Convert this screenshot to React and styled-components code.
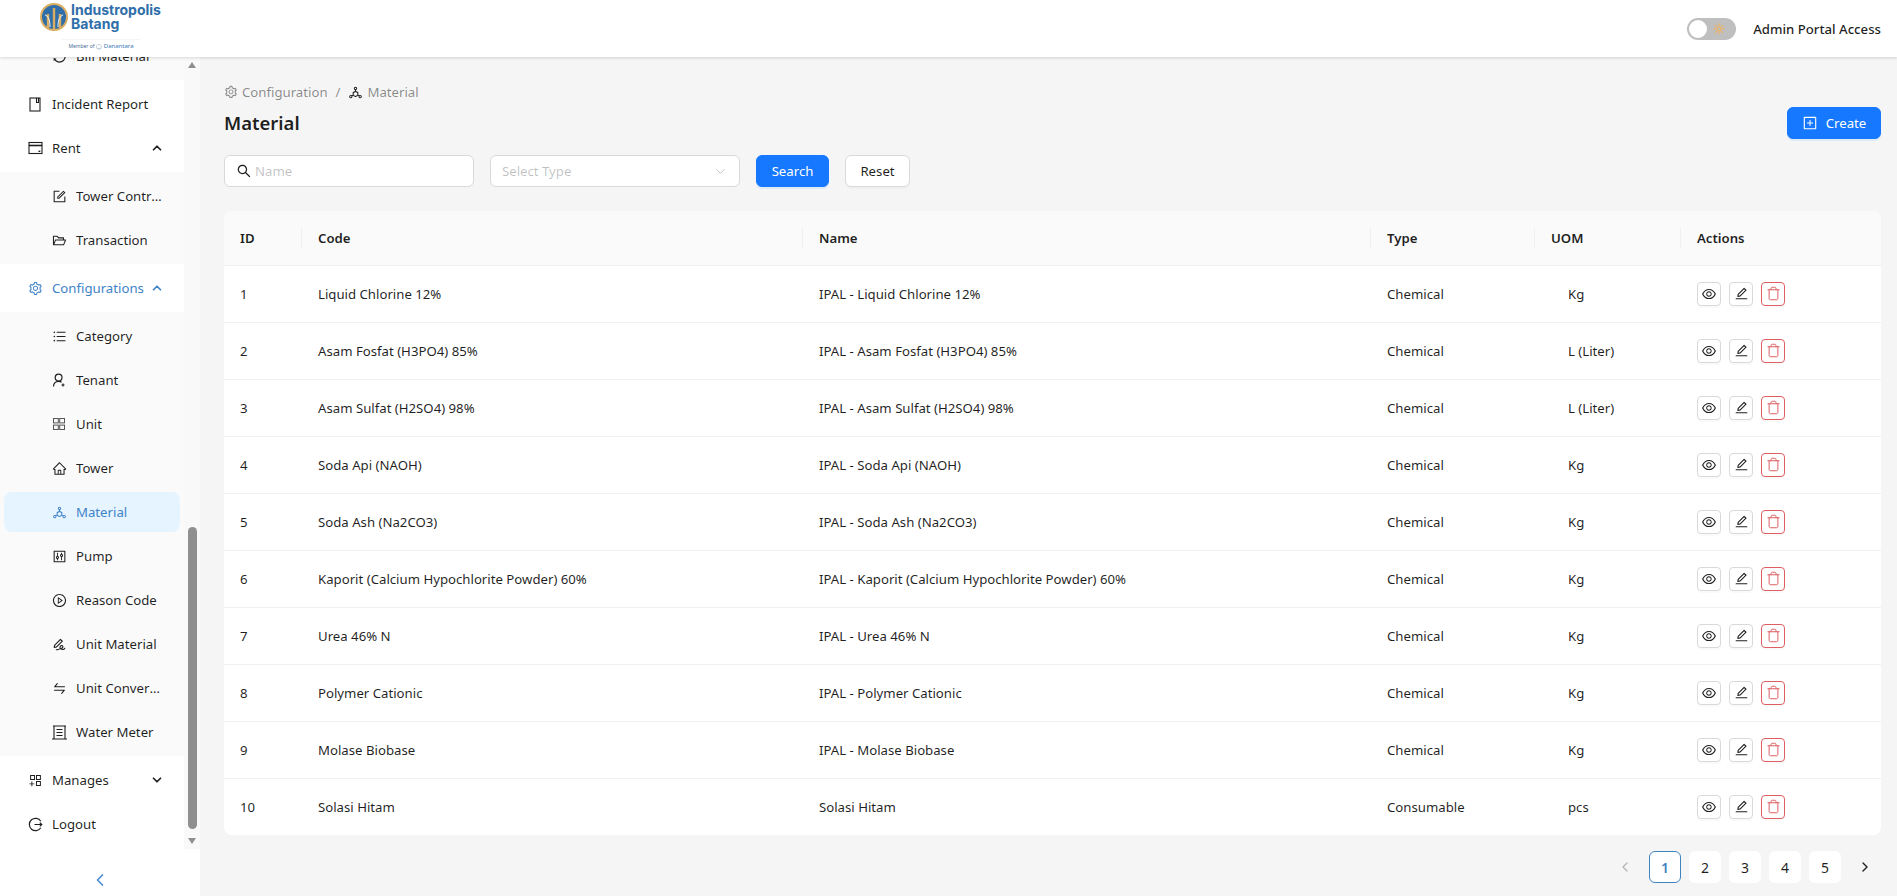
import React from 'react';
import styled, { createGlobalStyle } from 'styled-components';
import {
  AiOutlineAppstoreAdd,
  AiOutlineControl,
  AiOutlineDeploymentUnit,
  AiOutlineEdit,
  AiOutlineEye,
  AiOutlineFolderOpen,
  AiOutlineForm,
  AiOutlineHome,
  AiOutlinePlayCircle,
  AiOutlinePlusSquare,
  AiOutlineSearch,
  AiOutlineSetting,
  AiOutlineSignature,
  AiOutlineSwap,
  AiOutlineSync,
  AiOutlineUnorderedList,
} from 'react-icons/ai';
import { LuChevronDown, LuChevronLeft, LuChevronRight, LuChevronUp, LuSun, LuTrash } from 'react-icons/lu';

const GlobalStyle = createGlobalStyle`
  html, body {
    margin: 0;
    padding: 0;
    height: 100%;
  }
  body {
    font-family: "Noto Sans", "Open Sans", Arial, sans-serif;
    font-size: 13.2px;
    color: rgba(0, 0, 0, 0.88);
    background: #f5f5f5;
  }
  * {
    box-sizing: border-box;
  }
`;

const Page = styled.div`
  display: flex;
  flex-direction: column;
  height: 100vh;
  overflow: hidden;
`;

const Header = styled.header`
  position: relative;
  z-index: 2;
  flex: none;
  display: flex;
  align-items: center;
  justify-content: space-between;
  height: 57px;
  padding: 0 16px 0 40px;
  background: #fff;
  box-shadow: 0 1px 3px rgba(0, 0, 0, 0.14);
`;

const Logo = styled.div`
  display: flex;
  flex-direction: column;
  align-items: center;
  width: 122px;
  margin-top: -5px;
`;

const LogoTop = styled.div`
  display: flex;
  align-items: center;
  gap: 3px;
  width: 100%;
`;

const LogoName = styled.div`
  font-family: Inter, sans-serif;
  font-size: 14px;
  font-weight: 700;
  line-height: 14px;
  color: #2f6ea9;
`;

const LogoMember = styled.div`
  display: flex;
  align-items: center;
  gap: 2px;
  margin-top: 8px;
  padding: 3px 6px 0;
  border-top: 1px solid #f4f4f4;
  font-size: 5px;
  line-height: 7px;
  color: #4a6f96;
`;

const LogoMemberName = styled.span`
  font-size: 6px;
  color: #3c78b5;
`;

const AccessBox = styled.div`
  display: flex;
  align-items: center;
  gap: 17px;
  font-weight: 500;
`;

const Toggle = styled.div`
  position: relative;
  width: 49px;
  height: 22px;
  border-radius: 11px;
  background: #bfbfbf;
  color: #e9b36c;
  display: flex;
  align-items: center;
  justify-content: flex-end;
  padding-right: 11px;
`;

const ToggleKnob = styled.span`
  position: absolute;
  top: 2px;
  left: 2px;
  width: 18px;
  height: 18px;
  border-radius: 50%;
  background: #fff;
`;

const Body = styled.div`
  flex: 1;
  min-height: 0;
  display: flex;
`;

const Sidebar = styled.aside`
  flex: none;
  width: 200px;
  display: flex;
  flex-direction: column;
  background: #fff;
`;

const SideScroll = styled.div`
  flex: none;
  height: 792px;
  display: flex;
`;

const Menu = styled.nav`
  flex: none;
  width: 184px;
  overflow: hidden;
`;

const MenuInner = styled.div`
  display: flex;
  flex-direction: column;
  gap: 4px;
  margin-top: -25px;
`;

const SubList = styled.div`
  display: flex;
  flex-direction: column;
  gap: 4px;
  padding: 4px 0;
  background: #fafafa;
`;

const MenuItem = styled.div`
  display: flex;
  align-items: center;
  flex: none;
  height: 40px;
  margin: 0 4px;
  padding: 0 16px 0 ${(p) => (p.$sub ? 48 : 24)}px;
  border-radius: 8px;
  color: ${(p) => (p.$active || p.$open ? '#3f83c8' : 'rgba(0, 0, 0, 0.88)')};
  background: ${(p) => (p.$active ? '#e6f4ff' : 'transparent')};
  svg {
    flex: none;
  }
`;

const MenuIcon = styled.span`
  flex: none;
  display: flex;
  align-items: center;
  justify-content: center;
  width: 16px;
  margin: 0 9px 0 -1px;
  font-size: 15px;
`;

const MenuLabel = styled.span`
  flex: 1;
  min-width: 0;
  white-space: nowrap;
  overflow: hidden;
  text-overflow: ellipsis;
`;

const Rail = styled.div`
  flex: none;
  width: 16px;
  display: flex;
  flex-direction: column;
  align-items: center;
  background: #f9f9f9;
`;

const RailArrow = styled.div`
  flex: none;
  width: 0;
  height: 0;
  margin: 5px 0;
  border-left: 4.5px solid transparent;
  border-right: 4.5px solid transparent;
  ${(p) => (p.$down ? 'border-top: 6px solid #8f8f8f;' : 'border-bottom: 6px solid #8f8f8f;')}
`;

const RailTrack = styled.div`
  flex: 1;
  display: flex;
  align-items: flex-start;
  padding-top: 454px;
`;

const RailThumb = styled.div`
  width: 9px;
  height: 302px;
  border-radius: 5px;
  background: #8f8f8f;
`;

const CollapseBar = styled.div`
  flex: 1;
  display: flex;
  align-items: center;
  justify-content: center;
  padding-top: 15px;
  color: #4a8bd0;
`;

const Main = styled.main`
  flex: 1;
  min-width: 0;
  padding: 24px 16px 0 24px;
`;

const Breadcrumb = styled.div`
  display: flex;
  align-items: center;
  height: 22px;
  color: rgba(0, 0, 0, 0.45);
`;

const Crumb = styled.span`
  display: flex;
  align-items: center;
  gap: 4px;
  svg {
    color: ${(p) => p.$iconColor || 'inherit'};
  }
`;

const CrumbSep = styled.span`
  margin: 0 8px;
`;

const TitleRow = styled.div`
  display: flex;
  align-items: center;
  justify-content: space-between;
  height: 32px;
  margin-top: 4px;
`;

const Title = styled.h1`
  margin: 0;
  font-size: 18.5px;
  font-weight: 600;
  line-height: 28px;
  color: rgba(0, 0, 0, 0.88);
`;

const Button = styled.button`
  display: inline-flex;
  align-items: center;
  justify-content: center;
  gap: 8px;
  height: 32px;
  width: ${(p) => p.$width}px;
  margin-left: ${(p) => p.$gap || 0}px;
  padding: 0;
  border-radius: 6px;
  border: 1px solid ${(p) => (p.$primary ? '#1677ff' : '#d9d9d9')};
  background: ${(p) => (p.$primary ? '#1677ff' : '#fff')};
  color: ${(p) => (p.$primary ? '#fff' : 'rgba(0, 0, 0, 0.88)')};
  box-shadow: 0 2px 0 ${(p) => (p.$primary ? 'rgba(5, 145, 255, 0.1)' : 'rgba(0, 0, 0, 0.02)')};
  font: inherit;
`;

const Filters = styled.form`
  display: flex;
  align-items: center;
  margin-top: 16px;
`;

const Field = styled.div`
  display: flex;
  align-items: center;
  width: 250px;
  height: 32px;
  margin-right: 16px;
  padding: 0 11px;
  background: #fff;
  border: 1px solid #d9d9d9;
  border-radius: 6px;
  color: rgba(0, 0, 0, 0.88);
`;

const NameInput = styled.input`
  flex: 1;
  min-width: 0;
  margin-left: 3px;
  padding: 0;
  border: 0;
  outline: 0;
  background: transparent;
  font: inherit;
  &::placeholder {
    color: rgba(0, 0, 0, 0.25);
  }
`;

const SelectHint = styled.span`
  flex: 1;
  color: rgba(0, 0, 0, 0.25);
`;

const SelectArrow = styled.span`
  display: flex;
  color: rgba(0, 0, 0, 0.25);
`;

const TableCard = styled.div`
  margin-top: 24px;
  background: #fff;
  border-radius: 8px;
  overflow: hidden;
`;

const Table = styled.table`
  width: 100%;
  border-collapse: collapse;
  table-layout: fixed;
`;

const Th = styled.th`
  position: relative;
  height: 54px;
  padding: 0 16px;
  background: #fafafa;
  border-bottom: 1px solid #f0f0f0;
  font-weight: 600;
  text-align: left;
  &:not(:last-child)::after {
    content: '';
    position: absolute;
    top: 17px;
    right: 0;
    width: 1px;
    height: 20px;
    background: #f0f0f0;
  }
`;

const Td = styled.td`
  height: 57px;
  padding: 0 16px 0 ${(p) => (p.$indent ? 33 : 16)}px;
  border-bottom: 1px solid #f0f0f0;
  tr:last-child & {
    border-bottom: 0;
  }
`;

const Actions = styled.div`
  display: flex;
  gap: 8px;
`;

const ActionButton = styled.button`
  display: flex;
  align-items: center;
  justify-content: center;
  width: 24px;
  height: 24px;
  padding: 0;
  border-radius: 4px;
  border: 1px solid ${(p) => (p.$danger ? '#dd5f62' : '#d9d9d9')};
  background: #fff;
  color: ${(p) => (p.$danger ? '#dd5f62' : 'rgba(0, 0, 0, 0.88)')};
  box-shadow: 0 2px 0 rgba(0, 0, 0, 0.02);
`;

const Pagination = styled.div`
  display: flex;
  justify-content: flex-end;
  gap: 8px;
  margin-top: 16px;
`;

const PageItem = styled.div`
  display: flex;
  align-items: center;
  justify-content: center;
  width: 32px;
  height: 32px;
  border-radius: 6px;
  background: ${(p) => (p.$arrow ? 'transparent' : '#fff')};
  border: 1px solid ${(p) => (p.$active ? '#3f83c0' : 'transparent')};
  color: ${(p) => (p.$active ? '#3f83c0' : p.$disabled ? 'rgba(0, 0, 0, 0.25)' : 'rgba(0, 0, 0, 0.88)')};
  font-weight: ${(p) => (p.$active ? 600 : 400)};
  font-size: 14px;
`;

function LogoMark() {
  return (
    <svg width="28" height="28" viewBox="0 0 28 28">
      <circle cx="14" cy="14" r="13" fill="#2f6ea9" stroke="#d9ad62" strokeWidth="2" />
      <path d="M8 25V11M14 26V5M20 25V11" stroke="#d9ad62" strokeWidth="2.4" fill="none" />
      <path d="M5 12c3 1 5 4 5 12M23 12c-3 1-5 4-5 12" stroke="#fff" strokeWidth="0.9" fill="none" />
    </svg>
  );
}

function ReportIcon() {
  return (
    <svg width="14" height="15" viewBox="0 0 14 15" fill="none" stroke="currentColor" strokeWidth="1.1">
      <rect x="2" y="1" width="10" height="13" />
      <path d="M8.5 1v4.5h2V1" />
    </svg>
  );
}

function RentIcon() {
  return (
    <svg width="15" height="14" viewBox="0 0 15 14" fill="none" stroke="currentColor" strokeWidth="1.1">
      <rect x="1" y="1.5" width="13" height="11" />
      <path d="M1 4.5h13" strokeWidth="1.6" />
      <path d="M10.5 10.3h1.8" strokeWidth="1.4" />
    </svg>
  );
}

function TenantIcon() {
  return (
    <svg width="14" height="15" viewBox="0 0 14 15" fill="none" stroke="currentColor" strokeWidth="1.2">
      <circle cx="6.6" cy="4.6" r="3.4" />
      <path d="M1.5 13.5c0-3 2.2-5.2 5.1-5.2 1.2 0 2.2.3 3 .9" />
      <path d="M11 10.5v3M9.5 12h3" />
    </svg>
  );
}

function UnitIcon() {
  return (
    <svg width="14" height="14" viewBox="0 0 14 14" fill="none" stroke="currentColor" strokeOpacity="0.75" strokeWidth="1">
      <rect x="1.5" y="1.5" width="4.8" height="4.4" />
      <rect x="7.7" y="1.5" width="4.8" height="4.4" />
      <rect x="1.5" y="8.1" width="4.8" height="4.4" />
      <rect x="7.7" y="8.1" width="4.8" height="4.4" />
    </svg>
  );
}

function MeterIcon() {
  return (
    <svg width="15" height="15" viewBox="0 0 15 15" fill="none" stroke="currentColor" strokeWidth="1.1">
      <path d="M1 1h13M0 14h15" />
      <path d="M2 1v13M13 1v13" />
      <path d="M4.5 4.5h6M4.5 7.5h6M4.5 10.5h6" />
    </svg>
  );
}

function LogoutIcon() {
  return (
    <svg width="15" height="15" viewBox="0 0 15 15" fill="none" stroke="currentColor" strokeWidth="1.2">
      <path d="M12.8 4.2A6.2 6.2 0 1 0 12.8 10.8" />
      <path d="M6.5 7.5h7.5M11.8 5.6l2 1.9-2 1.9" />
    </svg>
  );
}

const menu = [
  { label: 'Bill Material', icon: <AiOutlineSync />, sub: true },
  { label: 'Incident Report', icon: <ReportIcon /> },
  { label: 'Rent', icon: <RentIcon />, arrow: 'up' },
  { label: 'Tower Contract', icon: <AiOutlineForm />, sub: true },
  { label: 'Transaction', icon: <AiOutlineFolderOpen />, sub: true },
  { label: 'Configurations', icon: <AiOutlineSetting />, arrow: 'up', open: true },
  { label: 'Category', icon: <AiOutlineUnorderedList />, sub: true },
  { label: 'Tenant', icon: <TenantIcon />, sub: true },
  { label: 'Unit', icon: <UnitIcon />, sub: true },
  { label: 'Tower', icon: <AiOutlineHome />, sub: true },
  { label: 'Material', icon: <AiOutlineDeploymentUnit />, sub: true, active: true },
  { label: 'Pump', icon: <AiOutlineControl />, sub: true },
  { label: 'Reason Code', icon: <AiOutlinePlayCircle />, sub: true },
  { label: 'Unit Material', icon: <AiOutlineSignature />, sub: true },
  { label: 'Unit Conversion', icon: <AiOutlineSwap />, sub: true },
  { label: 'Water Meter', icon: <MeterIcon />, sub: true },
  { label: 'Manages', icon: <AiOutlineAppstoreAdd />, arrow: 'down' },
  { label: 'Logout', icon: <LogoutIcon /> },
];

const materials = [
  ['Liquid Chlorine 12%', 'IPAL - Liquid Chlorine 12%', 'Chemical', 'Kg'],
  ['Asam Fosfat (H3PO4) 85%', 'IPAL - Asam Fosfat (H3PO4) 85%', 'Chemical', 'L (Liter)'],
  ['Asam Sulfat (H2SO4) 98%', 'IPAL - Asam Sulfat (H2SO4) 98%', 'Chemical', 'L (Liter)'],
  ['Soda Api (NAOH)', 'IPAL - Soda Api (NAOH)', 'Chemical', 'Kg'],
  ['Soda Ash (Na2CO3)', 'IPAL - Soda Ash (Na2CO3)', 'Chemical', 'Kg'],
  ['Kaporit (Calcium Hypochlorite Powder) 60%', 'IPAL - Kaporit (Calcium Hypochlorite Powder) 60%', 'Chemical', 'Kg'],
  ['Urea 46% N', 'IPAL - Urea 46% N', 'Chemical', 'Kg'],
  ['Polymer Cationic', 'IPAL - Polymer Cationic', 'Chemical', 'Kg'],
  ['Molase Biobase', 'IPAL - Molase Biobase', 'Chemical', 'Kg'],
  ['Solasi Hitam', 'Solasi Hitam', 'Consumable', 'pcs'],
];

const columns = [
  ['ID', 78],
  ['Code', 501],
  ['Name', 568],
  ['Type', 164],
  ['UOM', 146],
  ['Actions', 200],
];

function renderItem(item) {
  return (
    <MenuItem key={item.label} $sub={item.sub} $active={item.active} $open={item.open}>
      <MenuIcon>{item.icon}</MenuIcon>
      <MenuLabel>{item.label}</MenuLabel>
      {item.arrow === 'up' && <LuChevronUp size={14} strokeWidth={3} />}
      {item.arrow === 'down' && <LuChevronDown size={14} strokeWidth={3} />}
    </MenuItem>
  );
}

// consecutive sub items share one tinted block
function groupMenu(items) {
  const groups = [];
  items.forEach((item) => {
    const last = groups[groups.length - 1];
    if (item.sub && Array.isArray(last)) last.push(item);
    else groups.push(item.sub ? [item] : item);
  });
  return groups;
}

export default function App() {
  return (
    <Page>
      <GlobalStyle />
      <Header>
        <Logo>
          <LogoTop>
            <LogoMark />
            <LogoName>
              Industropolis
              <br />
              Batang
            </LogoName>
          </LogoTop>
          <LogoMember>
            Member of ◯ <LogoMemberName>Danantara</LogoMemberName>
          </LogoMember>
        </Logo>
        <AccessBox>
          <Toggle>
            <ToggleKnob />
            <LuSun size={12} strokeWidth={3} />
          </Toggle>
          Admin Portal Access
        </AccessBox>
      </Header>
      <Body>
        <Sidebar>
          <SideScroll>
            <Menu>
              <MenuInner>
                {groupMenu(menu).map((group) =>
                  Array.isArray(group) ? (
                    <SubList key={group[0].label}>{group.map(renderItem)}</SubList>
                  ) : (
                    renderItem(group)
                  ),
                )}
              </MenuInner>
            </Menu>
            <Rail>
              <RailArrow />
              <RailTrack>
                <RailThumb />
              </RailTrack>
              <RailArrow $down />
            </Rail>
          </SideScroll>
          <CollapseBar>
            <LuChevronLeft size={20} />
          </CollapseBar>
        </Sidebar>
        <Main>
          <Breadcrumb>
            <Crumb>
              <AiOutlineSetting size={14} />
              Configuration
            </Crumb>
            <CrumbSep>/</CrumbSep>
            <Crumb $iconColor="rgba(0, 0, 0, 0.88)">
              <AiOutlineDeploymentUnit size={15} />
              Material
            </Crumb>
          </Breadcrumb>
          <TitleRow>
            <Title>Material</Title>
            <Button type="button" $primary $width={94}>
              <AiOutlinePlusSquare size={16} />
              Create
            </Button>
          </TitleRow>
          <Filters>
            <Field>
              <AiOutlineSearch size={16} />
              <NameInput placeholder="Name" />
            </Field>
            <Field>
              <SelectHint>Select Type</SelectHint>
              <SelectArrow>
                <LuChevronDown size={15} strokeWidth={1.5} />
              </SelectArrow>
            </Field>
            <Button type="button" $primary $width={73}>
              Search
            </Button>
            <Button type="button" $width={65} $gap={16}>
              Reset
            </Button>
          </Filters>
          <TableCard>
            <Table>
              <colgroup>
                {columns.map(([name, width]) => (
                  <col key={name} width={width} />
                ))}
              </colgroup>
              <thead>
                <tr>
                  {columns.map(([name]) => (
                    <Th key={name}>{name}</Th>
                  ))}
                </tr>
              </thead>
              <tbody>
                {materials.map(([code, name, type, uom], i) => (
                  <tr key={code}>
                    <Td>{i + 1}</Td>
                    <Td>{code}</Td>
                    <Td>{name}</Td>
                    <Td>{type}</Td>
                    <Td $indent>{uom}</Td>
                    <Td>
                      <Actions>
                        <ActionButton type="button">
                          <AiOutlineEye size={16} />
                        </ActionButton>
                        <ActionButton type="button">
                          <AiOutlineEdit size={15} />
                        </ActionButton>
                        <ActionButton type="button" $danger>
                          <LuTrash size={15} strokeWidth={1.6} />
                        </ActionButton>
                      </Actions>
                    </Td>
                  </tr>
                ))}
              </tbody>
            </Table>
          </TableCard>
          <Pagination>
            <PageItem $arrow $disabled>
              <LuChevronLeft size={16} />
            </PageItem>
            {[1, 2, 3, 4, 5].map((n) => (
              <PageItem key={n} $active={n === 1}>
                {n}
              </PageItem>
            ))}
            <PageItem $arrow>
              <LuChevronRight size={16} />
            </PageItem>
          </Pagination>
        </Main>
      </Body>
    </Page>
  );
}
